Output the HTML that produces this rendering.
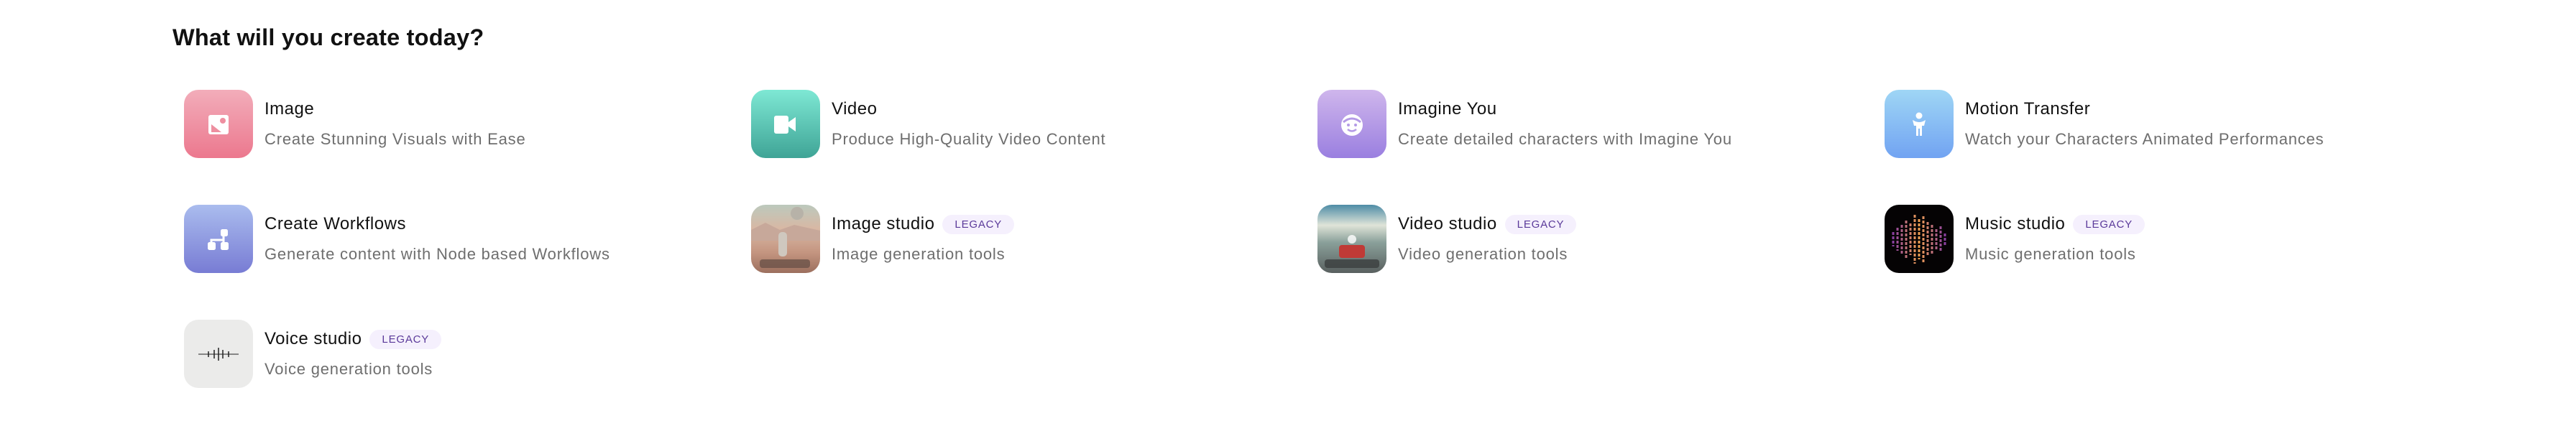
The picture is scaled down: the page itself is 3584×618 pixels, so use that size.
<!DOCTYPE html>
<html><head><meta charset="utf-8"><style>
*{margin:0;padding:0;box-sizing:border-box}
body{width:3584px;height:618px;background:#fff;font-family:"Liberation Sans",sans-serif;position:relative;overflow:hidden}
h1{position:absolute;left:240px;top:34px;font-size:32.5px;font-weight:700;color:#111;letter-spacing:0.2px}
.it{position:absolute;width:760px;height:96px}
.ic{position:absolute;left:0;top:0;width:96px;height:95px;border-radius:20px;overflow:hidden;display:flex;align-items:center;justify-content:center}
.t{position:absolute;left:112px;top:13px;font-size:24px;color:#111;display:flex;align-items:center;white-space:nowrap;letter-spacing:0.5px}
.d{position:absolute;left:112px;top:56px;font-size:22px;color:#6e6e6e;white-space:nowrap;letter-spacing:0.8px}
.b{display:inline-block;margin-left:11px;height:27px;line-height:27px;padding:0 17px;border-radius:14px;background:#f5f0fd;color:#5b3a9a;font-size:15px;letter-spacing:0.8px}
</style></head><body>
<h1>What will you create today?</h1>

<div class="it" style="left:256px;top:125px">
<div class="ic" style="background:linear-gradient(#f2adba,#ec788e)"><svg width="32" height="32" viewBox="0 0 32 32"><rect x="2" y="3" width="28" height="27" rx="3" fill="#fff"/><path d="M6 27 L6 16 L20 27Z" fill="#ee8fa0"/><circle cx="22" cy="11" r="4" fill="#ee8fa0"/></svg></div>
<div class="t">Image</div><div class="d">Create Stunning Visuals with Ease</div></div>

<div class="it" style="left:1045px;top:125px">
<div class="ic" style="background:linear-gradient(#7ee8d4,#3fa496)"><svg width="34" height="30" viewBox="0 0 34 30"><rect x="1" y="3" width="20" height="25" rx="3" fill="#fff"/><path d="M21 12 L31 5 V25 L21 18Z" fill="#fff"/></svg></div>
<div class="t">Video</div><div class="d">Produce High-Quality Video Content</div></div>

<div class="it" style="left:1833px;top:125px">
<div class="ic" style="background:linear-gradient(#cfb6ec,#9a7fe0)"><svg width="36" height="36" viewBox="0 0 36 36"><circle cx="18" cy="19" r="15" fill="#fff"/><path d="M6 15 Q18 5 30 15" stroke="#b49ae6" stroke-width="3" fill="none"/><circle cx="13" cy="19" r="2" fill="#b49ae6"/><circle cx="23" cy="19" r="2" fill="#b49ae6"/><path d="M12 25 Q18 30 24 25" stroke="#b49ae6" stroke-width="2.5" fill="none"/></svg></div>
<div class="t">Imagine You</div><div class="d">Create detailed characters with Imagine You</div></div>

<div class="it" style="left:2622px;top:125px">
<div class="ic" style="background:linear-gradient(#9fd6f5,#71a3f2)"><svg width="30" height="36" viewBox="0 0 30 36"><circle cx="15" cy="6" r="4.5" fill="#fff"/><path d="M6 12 Q15 18 24 12 L22 20 H19 V34 H16 V24 H14 V34 H11 V20 H8Z" fill="#fff"/></svg></div>
<div class="t">Motion Transfer</div><div class="d">Watch your Characters Animated Performances</div></div>

<div class="it" style="left:256px;top:285px">
<div class="ic" style="background:linear-gradient(#aabcee,#787cd4)"><svg width="36" height="36" viewBox="0 0 36 36"><rect x="21" y="4" width="10" height="10" rx="2.5" fill="#fff"/><rect x="3" y="22" width="11" height="11" rx="2.5" fill="#fff"/><rect x="21" y="22" width="11" height="11" rx="2.5" fill="#fff"/><path d="M25 10 V27 M8 22 V19 H25" stroke="#fff" stroke-width="3" fill="none"/></svg></div>
<div class="t">Create Workflows</div><div class="d">Generate content with Node based Workflows</div></div>

<div class="it" style="left:1045px;top:285px">
<div class="ic" style="background:linear-gradient(#bcc9bd 0%,#d8b8a4 35%,#c49580 70%,#9c6f5e 100%)"><svg width="96" height="95" viewBox="0 0 96 95"><circle cx="64" cy="12" r="9" fill="#b7b2a8"/><path d="M0 35 L20 25 L40 35 L60 28 L96 36 V50 H0Z" fill="#c7a89a"/><rect x="38" y="38" width="12" height="34" rx="5" fill="#cfc8bf"/><rect x="12" y="76" width="70" height="12" rx="4" fill="#6b5348" opacity=".8"/></svg></div>
<div class="t">Image studio<span class="b">LEGACY</span></div><div class="d">Image generation tools</div></div>

<div class="it" style="left:1833px;top:285px">
<div class="ic" style="background:linear-gradient(#4d8ca6 0%,#dfe4d8 30%,#8aa09a 55%,#59605f 100%)"><svg width="96" height="95" viewBox="0 0 96 95"><rect x="30" y="56" width="36" height="18" rx="4" fill="#c03a36"/><circle cx="48" cy="48" r="6" fill="#fff" opacity=".8"/><rect x="10" y="76" width="76" height="12" rx="4" fill="#3b3f3f" opacity=".8"/></svg></div>
<div class="t">Video studio<span class="b">LEGACY</span></div><div class="d">Video generation tools</div></div>

<div class="it" style="left:2622px;top:285px">
<div class="ic" style="background:#050304"><svg width="96" height="95" viewBox="0 0 96 95"><defs><linearGradient id="g" x1="0" x2="1"><stop offset="0" stop-color="#8a3fa0"/><stop offset=".5" stop-color="#f0a050"/><stop offset="1" stop-color="#8a3fa0"/></linearGradient></defs><g stroke="url(#g)" stroke-width="3" stroke-dasharray="4 2"><path d="M12 38V58M18 32V64M24 28V68M30 22V74M36 26V70M42 14V82M48 20V76M54 16V80M60 24V72M66 28V68M72 34V62M78 30V66M84 40V56"/></g></svg></div>
<div class="t">Music studio<span class="b">LEGACY</span></div><div class="d">Music generation tools</div></div>

<div class="it" style="left:256px;top:445px">
<div class="ic" style="background:#ebebea"><svg width="60" height="20" viewBox="0 0 60 20"><path d="M2 10H58" stroke="#222" stroke-width="1"/><path d="M16 6V14M24 4V16M30 1V19M36 4V16M44 6V14" stroke="#222" stroke-width="1.5"/></svg></div>
<div class="t">Voice studio<span class="b">LEGACY</span></div><div class="d">Voice generation tools</div></div>
</body></html>
